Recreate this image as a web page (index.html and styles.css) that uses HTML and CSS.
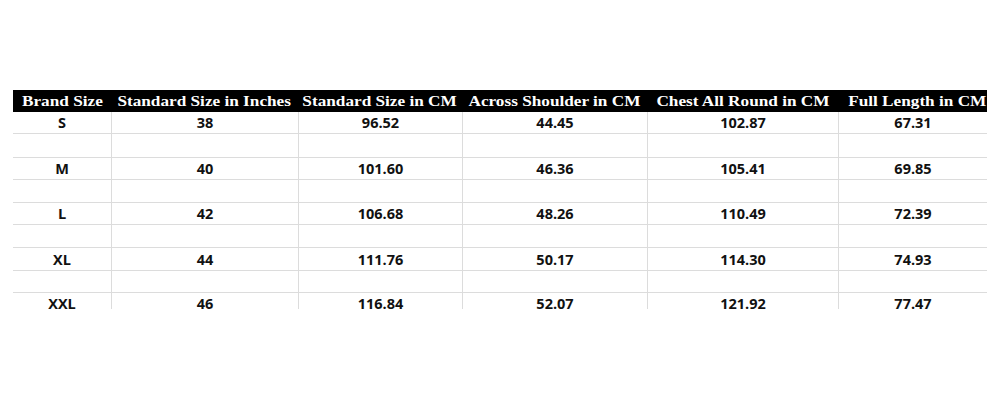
FILE: index.html
```html
<!DOCTYPE html>
<html>
<head>
<meta charset="utf-8">
<link rel="stylesheet" href="styles.css">
</head>
<body>
<div class="page">
  <div class="sheet">
    <div class="row head">
      <div class="c"><span>Brand Size</span></div>
      <div class="c"><span>Standard Size in Inches</span></div>
      <div class="c"><span>Standard Size in CM</span></div>
      <div class="c"><span>Across Shoulder in CM</span></div>
      <div class="c"><span>Chest All Round in CM</span></div>
      <div class="c last"><span>Full Length in CM</span></div>
    </div>
    <div class="row h22">
      <div class="c">S</div><div class="c">38</div><div class="c">96.52</div><div class="c">44.45</div><div class="c">102.87</div><div class="c">67.31</div>
    </div>
    <div class="row h24 blank">
      <div class="c"></div><div class="c"></div><div class="c"></div><div class="c"></div><div class="c"></div><div class="c"></div>
    </div>
    <div class="row h22">
      <div class="c">M</div><div class="c">40</div><div class="c">101.60</div><div class="c">46.36</div><div class="c">105.41</div><div class="c">69.85</div>
    </div>
    <div class="row h23 blank">
      <div class="c"></div><div class="c"></div><div class="c"></div><div class="c"></div><div class="c"></div><div class="c"></div>
    </div>
    <div class="row h22">
      <div class="c">L</div><div class="c">42</div><div class="c">106.68</div><div class="c">48.26</div><div class="c">110.49</div><div class="c">72.39</div>
    </div>
    <div class="row h23 blank">
      <div class="c"></div><div class="c"></div><div class="c"></div><div class="c"></div><div class="c"></div><div class="c"></div>
    </div>
    <div class="row h23">
      <div class="c">XL</div><div class="c">44</div><div class="c">111.76</div><div class="c">50.17</div><div class="c">114.30</div><div class="c">74.93</div>
    </div>
    <div class="row h22 blank">
      <div class="c"></div><div class="c"></div><div class="c"></div><div class="c"></div><div class="c"></div><div class="c"></div>
    </div>
    <div class="row h22">
      <div class="c">XXL</div><div class="c">46</div><div class="c">116.84</div><div class="c">52.07</div><div class="c">121.92</div><div class="c">77.47</div>
    </div>
  </div>
</div>
</body>
</html>
```

FILE: styles.css
```css
html, body {
  margin: 0;
  padding: 0;
  background: #ffffff;
}

.page {
  width: 1000px;
  height: 400px;
  padding: 90px 0 0 13px;
  box-sizing: border-box;
}

.sheet {
  width: 974px;
  height: 219px;
  overflow: hidden;
}

.row {
  display: grid;
  grid-template-columns: 98px 187px 164px 185px 191px 149px;
  box-sizing: border-box;
  border-bottom: 1px solid #dcdcdc;
  font-family: "Open Sans", "Liberation Sans", sans-serif;
  font-weight: 700;
  font-size: 14.5px;
  color: #111111;
}

.row .c {
  display: flex;
  align-items: center;
  justify-content: center;
  white-space: nowrap;
  line-height: 1;
  padding-top: 2px;
  box-sizing: border-box;
}

.row .c + .c {
  border-left: 1px solid #dcdcdc;
}

.head {
  height: 22px;
  background: #000000;
  border-bottom: none;
  font-family: "Liberation Serif", "Times New Roman", serif;
  font-size: 15.5px;
  color: #ffffff;
}

.head .c {
  padding-top: 0;
}

.head .c.last {
  padding-left: 10px;
}

.head .c span {
  display: inline-block;
  transform: scaleX(1.11);
}

.head .c + .c {
  border-left: none;
}

.h22 { height: 22px; }
.h23 { height: 23px; }
.h24 { height: 24px; }
```
